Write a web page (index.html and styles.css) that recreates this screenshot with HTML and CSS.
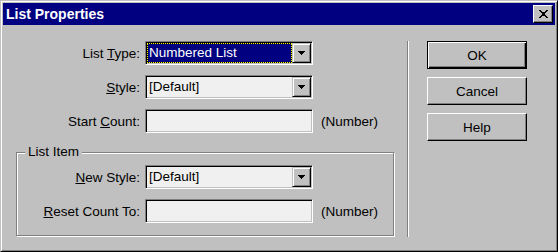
FILE: index.html
```html
<!DOCTYPE html>
<html lang="en">
<head>
    <meta charset="UTF-8">
    <meta name="viewport" content="width=device-width, initial-scale=1.0">
    <title>List Properties</title>
    <link rel="stylesheet" href="styles.css">
</head>
<body>
    <div class="window">
        <div class="titlebar">
            <span class="title">List Properties</span>
            <button class="close" aria-label="Close">
                <svg width="9" height="8" viewBox="0 0 9 8" shape-rendering="crispEdges">
                    <path d="M0 0h2v1h1v1h3V1h1V0h2v1H8v1H7v1H6v2h1v1h1v1h1v1H7V7H6V6H3v1H2v1H0V7h1V6h1V5h1V3H2V2H1V1H0z" fill="#000"/>
                </svg>
            </button>
        </div>
        <div class="client">
            <div class="form">
                <div class="rows">
                    <div class="row">
                        <label class="label">List <u>T</u>ype:</label>
                        <div class="field combo">
                            <div class="value selected">Numbered List</div>
                            <div class="drop">
                                <svg width="7" height="4" viewBox="0 0 7 4" shape-rendering="crispEdges">
                                    <path d="M0 0h7v1H6v1H5v1H4v1H3V3H2V2H1V1H0z" fill="#000"/>
                                </svg>
                            </div>
                        </div>
                    </div>
                    <div class="row">
                        <label class="label"><u>S</u>tyle:</label>
                        <div class="field combo">
                            <div class="value">[Default]</div>
                            <div class="drop">
                                <svg width="7" height="4" viewBox="0 0 7 4" shape-rendering="crispEdges">
                                    <path d="M0 0h7v1H6v1H5v1H4v1H3V3H2V2H1V1H0z" fill="#000"/>
                                </svg>
                            </div>
                        </div>
                    </div>
                    <div class="row">
                        <label class="label">Start <u>C</u>ount:</label>
                        <div class="field"></div>
                        <span class="note">(Number)</span>
                    </div>
                </div>

                <div class="group">
                    <span class="group-title">List Item</span>
                    <div class="rows">
                        <div class="row">
                            <label class="label"><u>N</u>ew Style:</label>
                            <div class="field combo">
                                <div class="value">[Default]</div>
                                <div class="drop">
                                    <svg width="7" height="4" viewBox="0 0 7 4" shape-rendering="crispEdges">
                                        <path d="M0 0h7v1H6v1H5v1H4v1H3V3H2V2H1V1H0z" fill="#000"/>
                                    </svg>
                                </div>
                            </div>
                        </div>
                        <div class="row">
                            <label class="label"><u>R</u>eset Count To:</label>
                            <div class="field"></div>
                            <span class="note">(Number)</span>
                        </div>
                    </div>
                </div>
            </div>

            <div class="separator"></div>

            <div class="buttons">
                <button class="btn default">OK</button>
                <button class="btn">Cancel</button>
                <button class="btn">Help</button>
            </div>
        </div>
    </div>
</body>
</html>
```

FILE: styles.css
```css
* {
    box-sizing: border-box;
}

body {
    margin: 0;
    font-family: "Liberation Sans", Arial, sans-serif;
    font-size: 13.5px;
    color: #000;
    background-color: #c0c0c0;
}

.window {
    width: 558px;
    height: 252px;
    padding: 2px;
    background-color: #c0c0c0;
    border: 1px solid;
    border-color: #c0c0c0 #000 #000 #c0c0c0;
    box-shadow: inset 1px 1px 0 #fff, inset -1px -1px 0 #808080;
    display: flex;
    flex-direction: column;
}

.titlebar {
    height: 22px;
    padding: 0 2px 0 3px;
    background-color: #000080;
    color: #fff;
    font-weight: bold;
    font-size: 14px;
    display: flex;
    align-items: center;
    justify-content: space-between;
}

.close {
    width: 20px;
    height: 18px;
    padding: 0;
    background-color: #c0c0c0;
    border: 1px solid;
    border-color: #fff #000 #000 #fff;
    box-shadow: inset -1px -1px 0 #808080;
    display: flex;
    align-items: center;
    justify-content: center;
}

.client {
    flex: 1;
    display: flex;
    align-items: flex-start;
    padding: 16px 0 0 13px;
}

.form {
    width: 378px;
}

.rows {
    display: flex;
    flex-direction: column;
    gap: 10px;
}

.row {
    height: 24px;
    display: flex;
    align-items: center;
}

.label {
    width: 124px;
    margin-right: 5px;
    text-align: right;
    white-space: nowrap;
}

.group .label {
    width: 123px;
}

.field {
    width: 168px;
    height: 24px;
    padding: 1px;
    background-color: #f0f0f0;
    border: 1px solid;
    border-color: #808080 #fff #fff #808080;
    box-shadow: inset 1px 1px 0 #000, inset -1px -1px 0 #c0c0c0;
}

.combo {
    display: flex;
}

.value {
    flex: 1;
    padding-left: 2px;
    line-height: 20px;
    white-space: nowrap;
}

.value.selected {
    padding-left: 1px;
    line-height: 18px;
    color: #fff;
    border: 1px dotted #ff0;
    background: linear-gradient(#000080, #000080) padding-box, #000;
}

.drop {
    width: 19px;
    height: 20px;
    background-color: #c0c0c0;
    border: 1px solid;
    border-color: #c0c0c0 #000 #000 #c0c0c0;
    box-shadow: inset 1px 1px 0 #fff, inset -1px -1px 0 #808080;
    display: flex;
    align-items: center;
    justify-content: center;
}

.note {
    margin-left: 8px;
}

.group {
    position: relative;
    margin-top: 19px;
    padding: 12px 0;
    border: 1px solid #808080;
    box-shadow: 1px 1px 0 #fff, inset 1px 1px 0 #fff;
}

.group-title {
    position: absolute;
    top: -9px;
    left: 8px;
    padding: 0 3px;
    background-color: #c0c0c0;
}

.separator {
    width: 2px;
    height: 196px;
    margin: 0 18px 0 13px;
    border-left: 1px solid #808080;
    border-right: 1px solid #fff;
}

.buttons {
    display: flex;
    flex-direction: column;
    gap: 8px;
}

.btn {
    width: 100px;
    height: 28px;
    padding: 0;
    font-family: inherit;
    font-size: 13.5px;
    color: #000;
    background-color: #c0c0c0;
    border: 1px solid;
    border-color: #fff #000 #000 #fff;
    box-shadow: inset -1px -1px 0 #808080;
}

.btn.default {
    border-color: #000;
    box-shadow: inset 1px 1px 0 #fff, inset -1px -1px 0 #000, inset -2px -2px 0 #808080;
}
```
